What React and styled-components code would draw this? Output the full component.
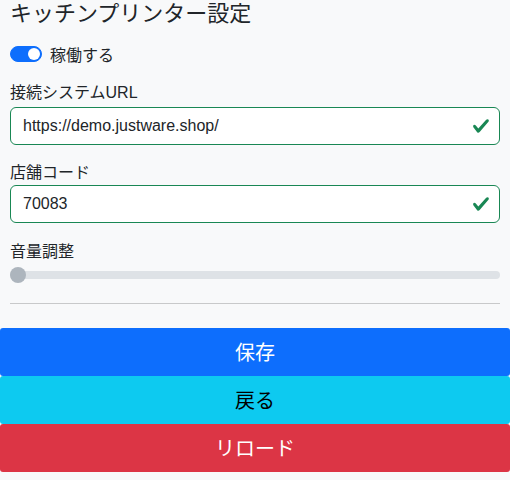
import { useState } from "react";
import styled, { createGlobalStyle } from "styled-components";

const Global = createGlobalStyle`
  body {
    margin: 0;
    background: #f8f9fa;
    color: #212529;
    font-family: "Liberation Sans", "Noto Sans CJK JP", sans-serif;
    font-size: 16px;
  }
`;

const Page = styled.div`
  width: 510px;
  min-height: 480px;
  background: #f8f9fa;
`;

const Form = styled.div`
  padding: 0 10px;
  display: flex;
  flex-direction: column;
`;

const Title = styled.h1`
  margin: 0;
  font-size: 22px;
  font-weight: 400;
  line-height: 28px;
`;

const SwitchRow = styled.label`
  display: flex;
  align-items: center;
  gap: 8px;
  height: 24px;
  margin-top: 14px;
  cursor: pointer;
`;

const Switch = styled.span`
  width: 32px;
  height: 16px;
  border-radius: 8px;
  background: ${(p) => (p.on ? "#0d6efd" : "#fff")};
  border: 1px solid ${(p) => (p.on ? "#0d6efd" : "#ced4da")};
  box-sizing: border-box;
  display: flex;
  align-items: center;
  justify-content: ${(p) => (p.on ? "flex-end" : "flex-start")};
  padding: 0 1px;
  &::after {
    content: "";
    width: 12px;
    height: 12px;
    border-radius: 50%;
    background: ${(p) => (p.on ? "#fff" : "#bfbfbf")};
  }
`;

const Label = styled.div`
  line-height: 24px;
  margin-top: ${(p) => p.top}px;
  margin-bottom: ${(p) => p.bottom}px;
`;

const Field = styled.div`
  position: relative;
`;

const Input = styled.input`
  display: block;
  width: 100%;
  box-sizing: border-box;
  height: 38px;
  padding: 6px 40px 6px 12px;
  font-family: "Liberation Sans", "Noto Sans CJK JP", sans-serif;
  font-size: 16px;
  color: #212529;
  background: #fff;
  border: 1px solid #198754;
  border-radius: 6px;
  outline: none;
`;

const Valid = styled.svg`
  position: absolute;
  right: 10px;
  top: 10px;
  width: 18px;
  height: 18px;
`;

const Range = styled.input`
  -webkit-appearance: none;
  appearance: none;
  display: block;
  width: 100%;
  height: 16px;
  margin: 3px 0 0;
  padding: 0;
  background: transparent;
  &::-webkit-slider-runnable-track {
    height: 8px;
    border-radius: 4px;
    background: #dee2e6;
  }
  &::-webkit-slider-thumb {
    -webkit-appearance: none;
    width: 16px;
    height: 16px;
    margin-top: -4px;
    border-radius: 50%;
    background: #adb5bd;
    border: 0;
  }
`;

const Rule = styled.hr`
  margin: 20px 0 24px;
  border: 0;
  border-top: 1px solid #c8c9ca;
`;

const Buttons = styled.div`
  display: flex;
  flex-direction: column;
`;

const Button = styled.button`
  height: 48px;
  width: 100%;
  border: 0;
  border-radius: 3px;
  padding: 0 0 2px;
  font-family: "Liberation Sans", "Noto Sans CJK JP", sans-serif;
  font-size: 20px;
  background: ${(p) => p.bg};
  color: ${(p) => p.fg};
  cursor: pointer;
`;

const Check = () => (
  <Valid viewBox="0 0 8 8">
    <path
      fill="#198754"
      d="M2.3 6.73.6 4.53c-.4-1.04.46-1.4 1.1-.8l1.1 1.4 3.4-3.8c.6-.63 1.6-.27 1.2.7l-4 4.6c-.43.5-.8.4-1.1.1z"
    />
  </Valid>
);

export default function App() {
  const [on, setOn] = useState(true);
  const [url, setUrl] = useState("https://demo.justware.shop/");
  const [code, setCode] = useState("70083");
  const [vol, setVol] = useState(0);

  return (
    <Page>
      <Global />
      <Form>
        <Title>キッチンプリンター設定</Title>
        <SwitchRow onClick={() => setOn(!on)}>
          <Switch on={on} />
          稼働する
        </SwitchRow>
        <Label top={15} bottom={2}>接続システムURL</Label>
        <Field>
          <Input value={url} onChange={(e) => setUrl(e.target.value)} />
          <Check />
        </Field>
        <Label top={16} bottom={0}>店舗コード</Label>
        <Field>
          <Input value={code} onChange={(e) => setCode(e.target.value)} />
          <Check />
        </Field>
        <Label top={17} bottom={0}>音量調整</Label>
        <Range
          type="range"
          min={0}
          max={100}
          value={vol}
          onChange={(e) => setVol(e.target.value)}
        />
        <Rule />
      </Form>
      <Buttons>
        <Button bg="#0d6efd" fg="#fff">保存</Button>
        <Button bg="#0dcaf0" fg="#000">戻る</Button>
        <Button bg="#dc3545" fg="#fff">リロード</Button>
      </Buttons>
    </Page>
  );
}
